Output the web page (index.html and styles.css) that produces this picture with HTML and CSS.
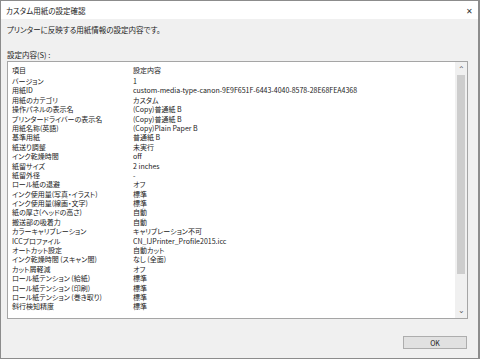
FILE: index.html
```html
<!DOCTYPE html>
<html lang="ja">
<head>
    <meta charset="UTF-8">
    <title>カスタム用紙の設定確認</title>
    <link rel="stylesheet" href="styles.css">
</head>
<body>
    <div class="window">
        <div class="titlebar">
            <span class="title">カスタム用紙の設定確認</span>
            <span class="close">&#x2715;</span>
        </div>
        <div class="content">
            <p class="message">プリンターに反映する用紙情報の設定内容です。</p>
            <p class="label">設定内容(S) :</p>
            <div class="listbox">
                <div class="rows">
                    <div class="row"><span>項目</span><span>設定内容</span></div>
                    <div class="row"><span>バージョン</span><span>1</span></div>
                    <div class="row"><span>用紙ID</span><span>custom-media-type-canon-9E9F651F-6443-4040-8578-28E68FEA4368</span></div>
                    <div class="row"><span>用紙のカテゴリ</span><span>カスタム</span></div>
                    <div class="row"><span>操作パネルの表示名</span><span>(Copy)普通紙 B</span></div>
                    <div class="row"><span>プリンタードライバーの表示名</span><span>(Copy)普通紙 B</span></div>
                    <div class="row"><span>用紙名称(英語)</span><span>(Copy)Plain Paper B</span></div>
                    <div class="row"><span>基準用紙</span><span>普通紙 B</span></div>
                    <div class="row"><span>紙送り調整</span><span>未実行</span></div>
                    <div class="row"><span>インク乾燥時間</span><span>off</span></div>
                    <div class="row"><span>紙留サイズ</span><span>2 inches</span></div>
                    <div class="row"><span>紙留外径</span><span>-</span></div>
                    <div class="row"><span>ロール紙の退避</span><span>オフ</span></div>
                    <div class="row"><span>インク使用量(写真・イラスト)</span><span>標準</span></div>
                    <div class="row"><span>インク使用量(線画・文字)</span><span>標準</span></div>
                    <div class="row"><span>紙の厚さ(ヘッドの高さ)</span><span>自動</span></div>
                    <div class="row"><span>搬送部の吸着力</span><span>自動</span></div>
                    <div class="row"><span>カラーキャリブレーション</span><span>キャリブレーション不可</span></div>
                    <div class="row"><span>ICCプロファイル</span><span>CN_IJPrinter_Profile2015.icc</span></div>
                    <div class="row"><span>オートカット設定</span><span>自動カット</span></div>
                    <div class="row"><span>インク乾燥時間 (スキャン間)</span><span>なし (全面)</span></div>
                    <div class="row"><span>カット屑軽減</span><span>オフ</span></div>
                    <div class="row"><span>ロール紙テンション (給紙)</span><span>標準</span></div>
                    <div class="row"><span>ロール紙テンション (印刷)</span><span>標準</span></div>
                    <div class="row"><span>ロール紙テンション (巻き取り)</span><span>標準</span></div>
                    <div class="row"><span>斜行検知精度</span><span>標準</span></div>
                </div>
                <div class="scrollbar">
                    <span class="arrow">&#x2303;</span>
                    <div class="track"><div class="thumb"></div></div>
                    <span class="arrow down">&#x2304;</span>
                </div>
            </div>
            <div class="footer">
                <button class="ok">OK</button>
            </div>
        </div>
    </div>
</body>
</html>
```

FILE: styles.css
```css
html, body {
    margin: 0;
    padding: 0;
}
body {
    width: 480px;
    height: 359px;
    background: #f0f0f0;
    font-family: "Noto Sans CJK JP", "Noto Sans", sans-serif;
    font-size: 7px;
    font-feature-settings: "palt";
    color: #222;
}
.window {
    box-sizing: border-box;
    width: 480px;
    height: 359px;
    border: 1px solid #8c8c8c;
    border-right-width: 2px;
    display: flex;
    flex-direction: column;
}
.titlebar {
    height: 18px;
    background: #fff;
    display: flex;
    align-items: center;
    justify-content: space-between;
    padding: 0 4px 0 5px;
}
.title {
    font-size: 7.5px;
}
.close {
    font-size: 8px;
    color: #333;
    margin-right: 1px;
}
.content {
    flex: 1;
    display: flex;
    flex-direction: column;
    padding: 0 10px 0 6px;
}
.message {
    margin: 5px 0 0 0;
    line-height: 11px;
    font-size: 7.5px;
}
.label {
    margin: 14px 0 0 0;
    line-height: 11px;
    font-size: 7.5px;
}
.listbox {
    margin-top: 1px;
    height: 258px;
    box-sizing: border-box;
    background: #fff;
    border: 1px solid #a5a5a5;
    display: flex;
}
.rows {
    flex: 1;
    padding: 3px 0 0 4px;
    overflow: hidden;
}
.row {
    display: grid;
    grid-template-columns: 121px 1fr;
    height: 9.4px;
    line-height: 9.4px;
    white-space: nowrap;
}
.row:first-child {
    height: 11px;
    line-height: 11px;
    margin-bottom: 1px;
}
.scrollbar {
    width: 12px;
    background: #f0f0f0;
    display: flex;
    flex-direction: column;
    align-items: center;
}
.arrow {
    height: 12px;
    line-height: 14px;
    font-size: 8px;
    color: #606060;
}
.arrow.down {
    line-height: 8px;
}
.track {
    flex: 1;
    width: 100%;
    display: flex;
    justify-content: center;
}
.thumb {
    width: 8px;
    height: 199px;
    margin-top: 1px;
    background: #cdcdcd;
}
.footer {
    display: flex;
    justify-content: flex-end;
    padding-top: 17px;
}
.ok {
    width: 64px;
    height: 13px;
    padding: 0;
    margin-right: 1px;
    background: #e1e1e1;
    border: 1px solid #adadad;
    font-family: inherit;
    font-size: 7px;
    color: #222;
}
```
